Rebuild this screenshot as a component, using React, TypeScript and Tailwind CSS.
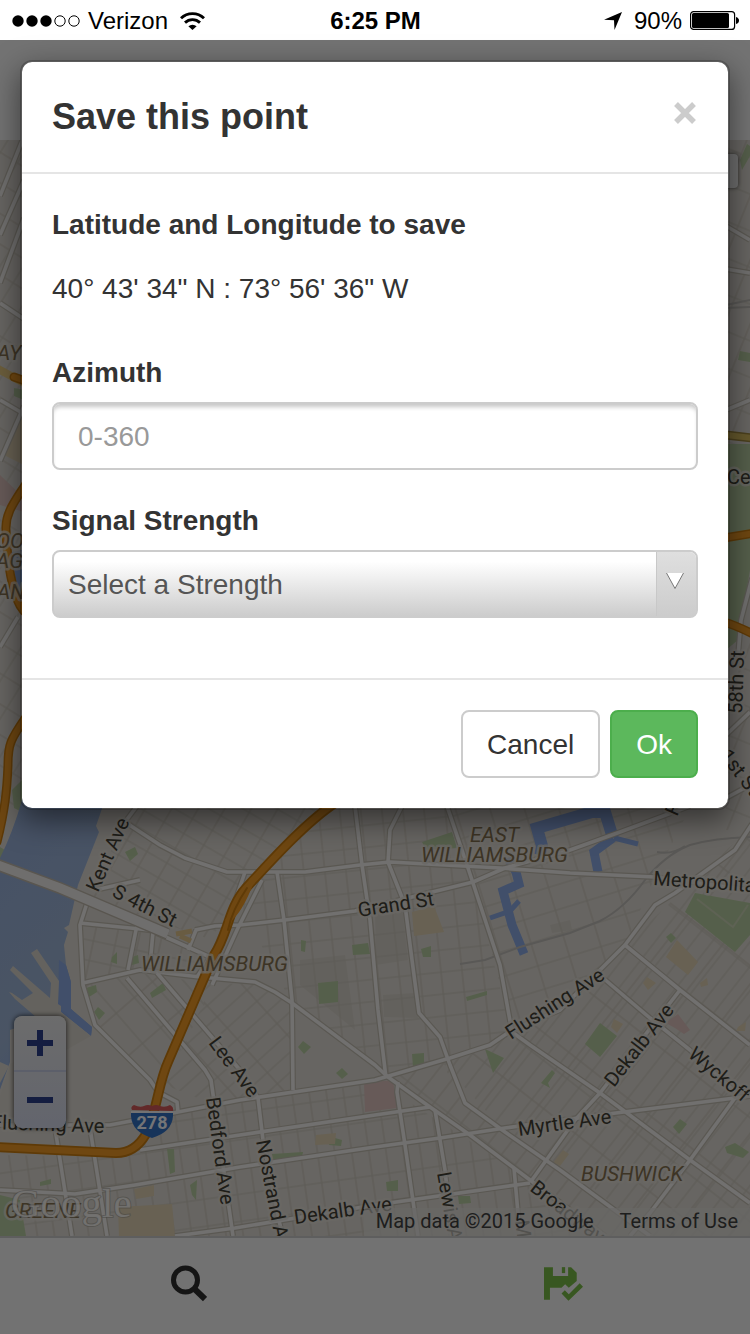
import React from "react";

type Street = { id: string; points: string; angle: number; w: number; h: number };

const BLOCKS: Street[] = [
  { id: "north", points: "130,808 330,808 240,880 212,940 90,898", angle: 30, w: 23, h: 17 },
  { id: "west", points: "83,985 140,972 215,985 165,1080 150,1078 95,1025", angle: 49, w: 40, h: 24 },
  { id: "wall", points: "84,925 150,932 212,960 205,977 140,970 84,983", angle: 12, w: 22, h: 20 },
  { id: "lee", points: "212,985 255,982 292,1003 293,1090 210,1103 165,1085", angle: -42, w: 40, h: 15 },
  { id: "center", points: "330,808 450,808 470,868 512,1035 388,1077 290,1000 240,905 250,872", angle: -6, w: 21, h: 22 },
  { id: "eastw", points: "450,808 690,808 655,877 625,945 560,1010 512,1030 475,890", angle: -17, w: 33, h: 24 },
  { id: "bushwick", points: "515,1040 625,945 750,828 750,1236 650,1236 505,1132 465,1103 440,1060", angle: 38, w: 46, h: 100 },
  { id: "bushwick2", points: "512,1036 625,945 750,828 750,1236 650,1236 590,1185 505,1132 440,1060", angle: -52, w: 60, h: 15 },
  { id: "broadway", points: "388,1077 450,1060 465,1103 650,1236 600,1236", angle: 38, w: 17, h: 60 },
  { id: "south", points: "0,1155 120,1157 160,1115 375,1080 530,1180 600,1236 0,1236", angle: -8, w: 17, h: 27 },
  { id: "farwest", points: "0,140 24,140 24,808 0,808", angle: -58, w: 26, h: 20 },
  { id: "fareast", points: "726,140 750,140 750,830 726,830", angle: 22, w: 24, h: 34 },
];

const ROADS = [
  "M137 806 L125 822 L160 845 L185 858 L227 872 L305 872 L360 865 L390 862 L500 868 L570 873 L655 877 L750 890",
  "M88 900 L80 925 L83 985 L95 1025 L150 1080 L158 1092 L177 1102 L178 1112",
  "M95 890 L140 880",
  "M80 923 L150 930 L210 957",
  "M83 983 L140 970 L200 977 L255 982 L275 992 L292 1003 L375 1065 L388 1077 L430 1107 L470 1135 L530 1180 L605 1236",
  "M277 872 L284 920 L292 1000 L293 1090",
  "M195 930 L215 926 L240 925 L285 920 L355 911 L473 882 L505 868 L570 850 L620 832 L690 806",
  "M355 806 L362 865 L370 920 L378 1010 L386 1078",
  "M402 806 L390 830 L388 862 L405 905 L412 960 L419 1013 L440 1037 L450 1065 L465 1103 L505 1132 L560 1170 L650 1236",
  "M447 806 L468 868 L500 965 L512 1032 L530 1045 L600 1093 L690 1160 L750 1203",
  "M0 1125 L110 1125 L178 1112 L240 1100 L375 1080 L450 1058 L490 1045 L512 1030 L560 1010 L600 970 L625 945 L655 905 L675 893 L700 875 L735 850 L752 824",
  "M0 1190 L75 1194 L135 1185 L240 1167 L375 1147 L440 1138 L505 1128 L600 1115 L735 1098 L750 1096",
  "M140 1150 L240 1135 L375 1115 L430 1107",
  "M175 1236 L235 1228 L375 1205 L530 1183",
  "M157 973 L240 1070 L258 1098 L263 1140 L280 1225 L283 1236",
  "M127 978 L205 1070 L211 1080 L233 1236",
  "M398 1082 L397 1092 L405 1145 L418 1236",
  "M435 1110 L445 1170 L452 1236",
  "M514 1168 L520 1236",
  "M532 1180 L575 1120 L600 1093 L680 990",
  "M625 945 L680 990 L750 1045",
  "M603 978 L650 1018 L690 1050 L735 1092",
  "M735 1098 L690 1160 L650 1213 L630 1236",
  "M55 1128 L72 1236",
  "M90 1128 L107 1236",
  "M245 872 L232 910 L215 950 L197 977",
  "M262 880 L237 930 L212 985",
  "M137 925 L128 970",
  "M153 932 L150 965",
  "M196 930 L188 950",
  "M0 196 L24 136",
  "M0 235 L24 180",
  "M0 283 L24 218",
  "M0 303 L24 319",
  "M0 400 L24 414",
  "M0 461 L24 406",
  "M0 647 L18 617",
  "M726 226 L750 240",
  "M726 269 L750 273",
  "M726 410 L750 400",
  "M738 656 L741 620 L752 578",
  "M726 735 L750 712",
  "M726 798 L750 785",
];

const PARKS = [
  "695,893 750,903 750,935 735,952 685,912",
  "422,842 452,832 457,848 426,850",
  "125,852 135,847 138,854 130,861",
  "318,983 338,981 338,1002 319,1004",
  "352,945 368,943 370,954 353,955",
  "600,1023 617,1036 600,1057 585,1044",
  "485,1049 504,1058 493,1073",
  "86,988 96,985 97,992 89,997",
  "94,1012 98,1007 105,1013 99,1020",
  "150,993 163,983 166,990 152,998",
  "272,1154 303,1152 302,1157 273,1161",
  "167,1149 174,1149 175,1172 170,1174",
  "190,1185 197,1180 196,1200 192,1195",
  "328,1136 342,1140 341,1146 329,1145",
  "298,1047 303,1041 311,1047 304,1054",
  "336,1073 342,1068 348,1074 342,1079",
  "412,1054 424,1053 424,1066 413,1067",
  "421,949 431,946 431,957 423,957",
  "386,1182 398,1180 398,1191 387,1191",
  "673,1127 680,1119 687,1124 679,1134",
  "725,1147 735,1143 749,1152 743,1158 727,1153",
  "541,1083 552,1070 555,1073 548,1083 550,1088",
  "666,937 671,933 676,938 671,943",
  "466,997 487,991 487,995 467,1001",
  "301,940 306,941 305,952 301,951",
  "0,1195 20,1200 26,1236 0,1236",
  "40,1182 51,1179 51,1184 40,1186",
  "458,1196 470,1196 471,1203 459,1204",
  "728,444 750,444 750,570 738,640 726,650",
  "740,160 747,144 750,146 750,156 742,170",
  "740,351 750,353 750,362 738,360",
  "0,847 5,850 2,862 0,862",
  "12,790 22,780 22,812 14,808",
  "14,388 24,390 24,400 14,396",
  "112,957 117,952 117,964 111,962",
  "132,957 138,955 139,963 132,965",
];

const TAN = [
  "412,912 434,906 444,932 414,936",
  "118,1207 172,1204 175,1236 119,1236",
  "134,1189 154,1185 154,1196 136,1199",
  "316,1135 336,1133 335,1144 315,1145",
  "677,940 698,962 688,975 666,957",
  "563,1150 569,1154 560,1166 553,1163",
  "614,1019 623,1024 617,1033 611,1027",
  "647,977 656,983 648,990 643,983",
  "700,983 707,978 708,985 701,987",
  "738,1027 746,1022 745,1031 736,1031",
  "8,440 24,415 24,465 4,455",
];

const ROSE = [
  "364,1083 393,1080 397,1108 365,1112",
  "666,1023 678,1014 690,1030 684,1034 675,1028",
  "0,475 24,498 24,512 0,505",
];

type Label = { t: string; x: number; y: number; r?: number; area?: boolean };

const LABELS: Label[] = [
  { t: "Kent Ave", x: 98, y: 893, r: -66 },
  { t: "S 4th St", x: 111, y: 896, r: 27 },
  { t: "Grand St", x: 359, y: 917, r: -9 },
  { t: "Metropolita", x: 653, y: 885, r: 4 },
  { t: "Flushing Ave", x: 511, y: 1040, r: -33 },
  { t: "Dekalb Ave", x: 614, y: 1088, r: -52 },
  { t: "Wyckoff", x: 687, y: 1056, r: 40 },
  { t: "Myrtle Ave", x: 519, y: 1136, r: -8 },
  { t: "Lee Ave", x: 208, y: 1043, r: 53 },
  { t: "Bedford Ave", x: 206, y: 1098, r: 82 },
  { t: "Nostrand A", x: 256, y: 1141, r: 79 },
  { t: "Dekalb Ave", x: 295, y: 1224, r: -8 },
  { t: "Flushing Ave", x: -9, y: 1129, r: 2 },
  { t: "Lewis A", x: 437, y: 1173, r: 80 },
  { t: "Broadway", x: 529, y: 1190, r: 38 },
  { t: "M", x: 515, y: 1221, r: 82 },
  { t: "58th St", x: 742, y: 714, r: -88 },
  { t: "1st St", x: 719, y: 756, r: 52 },
  { t: "Ce", x: 727, y: 484 },
  { t: "F", x: 677, y: 817, r: -66 },
  { t: "WILLIAMSBURG", x: 141, y: 971, area: true },
  { t: "EAST", x: 470, y: 842, area: true },
  { t: "WILLIAMSBURG", x: 421, y: 862, area: true },
  { t: "BUSHWICK", x: 581, y: 1181, area: true },
  { t: "GREENE", x: 5, y: 1218, area: true },
  { t: "AY P", x: -3, y: 360, area: true },
  { t: "OOP", x: -4, y: 548, area: true },
  { t: "AGE", x: -4, y: 568, area: true },
  { t: "ANE", x: -3, y: 599, area: true },
];

const HIGHWAY =
  "M335 803 C305 823 270 862 246 888 C228 908 228 935 214 955 C198 992 182 1030 168 1062 C158 1084 158 1108 146 1134 C138 1148 128 1153 116 1153 L-5 1147";
const HIGHWAYS = [
  "M28 382 L14 377",
  "M27 482 C16 500 5 512 6 530 C7 555 10 580 16 595 C18 605 22 610 28 615",
  "M26 717 C10 740 8 745 8 765 C7 790 5 810 -3 842",
  "M724 538 L755 533",
  "M724 622 C735 625 745 630 755 635",
];

function MapCanvas() {
  return (
    <svg
      className="absolute inset-0 h-full w-full"
      viewBox="0 140 750 1096"
      preserveAspectRatio="xMidYMin slice"
      role="img"
      aria-label="Map of Williamsburg and Bushwick"
    >
      <defs>
        {BLOCKS.map((b) => (
          <pattern
            key={b.id}
            id={b.id}
            width={b.w}
            height={b.h}
            patternUnits="userSpaceOnUse"
            patternTransform={`rotate(${b.angle})`}
          >
            <path d={`M0 1H${b.w}M1 0V${b.h}`} stroke="#bcb8ae" strokeWidth="1.2" fill="none" />
          </pattern>
        ))}
        <linearGradient id="river" x1="0" y1="0" x2="0.35" y2="1">
          <stop offset="0" stopColor="#8ca3cc" />
          <stop offset="0.75" stopColor="#94a9c8" />
          <stop offset="1" stopColor="#86a0d0" />
        </linearGradient>
      </defs>
      <rect y="140" width="750" height="1096" fill="#cfcbc4" />
      <path d="M375 908 L402 905 L408 960 L376 965Z M383 995 L415 993 L418 1018 L384 1017Z M300 960 L345 955 L355 1030 L300 985Z M550 925 L570 920 L572 930 L552 933Z" fill="#c7c3bb" />
      {BLOCKS.map((b) => (
        <polygon key={b.id} points={b.points} fill={`url(#${b.id})`} />
      ))}
      <g fill="#abbf96">
        {PARKS.map((p) => (
          <polygon key={p} points={p} />
        ))}
      </g>
      <g fill="#d0c2a6">
        {TAN.map((p) => (
          <polygon key={p} points={p} />
        ))}
      </g>
      <g fill="#ceb4b0">
        {ROSE.map((p) => (
          <polygon key={p} points={p} />
        ))}
      </g>
      <path d="M697 899 L733 927 L748 905" fill="none" stroke="#bcc4a8" strokeWidth="2" />

      <path
        d="M22 790 L105 800 L96 826 L99 832 L78 885 L69 925 L64 928 L68 932 L64 945 L66 965 L71 982 L71 1009 L92 1027 L91 1036 L61 1012 L40 1020 L10 1030 L10 1062 L-2 1095 L-2 862 Q12 835 22 800Z"
        fill="url(#river)"
      />
      <path d="M59 960 L66 965 L71 982 L71 1009 L92 1027 L91 1036 L61 1012 L58 1005Z" fill="#829ed4" />
      <path
        d="M31 953 L37 949 L59 981 L58 1004 L61 1006 L61 1012 L91 1036 L66 1050 L40 1040 L36 1017 L15 999 L9 992 L12 993 L22 1000 L33 993 L10 970 L13 966 L50 998 L51 983Z"
        fill="#c9c5bd"
      />
      <path d="M0 1062 L9 1066 L0 1083Z M10 1064 L14 1062 L66 1040V1122H0V1097Z" fill="#ccc8c0" />
      <path d="M12 552 L24 550 V596 L16 585Z" fill="#86a0d0" />
      <g fill="none" stroke="#829ed4" strokeWidth="9">
        <path d="M540 855 L542 846 L537 828 L592 812 L605 812 L613 838" strokeWidth="12" />
        <path d="M613 838 L594 852 L598 872 M508 858 L516 872 L519 884 L503 891 L512 925 L524 954" />
        <path d="M638 844 L614 838 M490 918 L510 911 L519 901" strokeWidth="5" />
      </g>

      <path
        d="M460 964 L485 960 L520 947 L570 933 L600 921 Q625 908 645 880 Q665 855 690 845 Q715 838 752 837 M657 852 Q672 855 685 846 M726 305 L750 300 M726 308 L750 307"
        fill="none"
        stroke="#b3b0ac"
        strokeWidth="2"
      />

      <g fill="none" strokeLinejoin="round">
        {ROADS.map((d) => (
          <path key={d} d={d} stroke="#b5b0a5" strokeWidth="6" />
        ))}
        {ROADS.map((d) => (
          <path key={d} d={d} stroke="#e2e0df" strokeWidth="3.6" />
        ))}
      </g>
      <path d="M-2 865 L60 888 L168 934" fill="none" stroke="#b3aca0" strokeWidth="12" />
      <path d="M-2 865 L60 888 L168 934" fill="none" stroke="#dfdddb" strokeWidth="9" />
      <path d="M176 934 L192 931 M180 936 L191 941" stroke="#d3b885" strokeWidth="5" />
      <path d="M-2 369 L24 383" stroke="#d8bd78" strokeWidth="8" />
      <path d="M726 435 L752 438" stroke="#96813c" strokeWidth="9" />
      <path d="M726 435 L752 438" stroke="#cbb058" strokeWidth="6" />
      <g fill="none" strokeLinejoin="round" strokeLinecap="round">
        {HIGHWAYS.map((d) => (
          <path key={d} d={d} stroke="#bd740e" strokeWidth="9" />
        ))}
        {HIGHWAYS.map((d) => (
          <path key={d} d={d} stroke="#df8f22" strokeWidth="6" />
        ))}
        <path d={HIGHWAY} stroke="#bd740e" strokeWidth="10" />
        <path d={HIGHWAY} stroke="#df8f22" strokeWidth="6.5" />
        <path d="M252 880 Q240 912 228 920" stroke="#df8f22" strokeWidth="5" />
        <path d="M247 888 Q232 910 228 930" stroke="#bd740e" strokeWidth="2" />
      </g>

      {LABELS.map((l) => (
        <text
          key={`${l.t}${l.x}`}
          transform={`translate(${l.x} ${l.y}) rotate(${l.r ?? 0})`}
          fontFamily="Roboto, sans-serif"
          fontSize={l.area ? 21 : 20}
          fontStyle={l.area ? "italic" : "normal"}
          fill={l.area ? "#7a694a" : "#3c3a30"}
          stroke="#d4d0c9"
          strokeOpacity="0.75"
          strokeWidth="5"
          strokeLinejoin="round"
          paintOrder="stroke"
        >
          {l.t}
        </text>
      ))}

      <path d="M132 1110 Q130 1107 134 1105 Q140 1108 144 1106 Q148 1104 152 1106 Q156 1104 160 1106 Q165 1108 170 1105 Q174 1107 173 1111Z" fill="#c45252" />
      <path d="M131 1111 H173 V1116 Q172 1132 152 1138 Q132 1132 131 1116Z" fill="#2f68b4" />
      <path d="M131 1112 H173" stroke="#e6e6e6" strokeWidth="2" />
      <text x="152" y="1129" textAnchor="middle" fontFamily="Roboto, sans-serif" fontWeight="700" fontSize="18" fill="#e8e8ec">
        278
      </text>
      <text
        x="11"
        y="1217"
        fontFamily="'Liberation Serif', serif"
        fontSize="41"
        fill="#edebe8"
        fillOpacity="0.85"
        stroke="#8d8982"
        strokeOpacity="0.5"
        strokeWidth="2"
        paintOrder="stroke"
      >
        Google
      </text>
    </svg>
  );
}

function StatusBar() {
  return (
    <div className="grid h-10 shrink-0 grid-cols-[1fr_auto_1fr] items-center bg-white pt-px pr-[11px] pl-3 text-2xl text-black">
      <div className="flex items-center gap-2">
        <svg width="68" height="12" viewBox="0 0 68 12" role="img" aria-label="Signal 3 of 5">
          <g fill="#000">
            <circle cx="6" cy="6" r="5.7" />
            <circle cx="20" cy="6" r="5.7" />
            <circle cx="34" cy="6" r="5.7" />
          </g>
          <g fill="none" stroke="#000">
            <circle cx="48" cy="6" r="5.2" />
            <circle cx="62" cy="6" r="5.2" />
          </g>
        </svg>
        <span>Verizon</span>
        <svg className="ml-1" width="25" height="18" viewBox="0 0 25 18" role="img" aria-label="Wi-Fi">
          <g fill="none" stroke="#000" strokeWidth="2.9">
            <path d="M1 6.3 A16.5 16.5 0 0 1 24 6.3" />
            <path d="M5 10.6 A11 11 0 0 1 20 10.6" />
          </g>
          <path d="M8.4 14.3 A6 6 0 0 1 16.6 14.3 L12.5 18Z" />
        </svg>
      </div>
      <span className="font-bold">6:25 PM</span>
      <div className="flex items-center justify-end gap-2">
        <svg className="mr-1" width="18" height="18" viewBox="0 0 18 18" role="img" aria-label="Location">
          <path d="M18 0 L10.5 18 L10 8.2 L0 7.8Z" />
        </svg>
        <span>90%</span>
        <svg width="49" height="19" viewBox="0 0 49 19" role="img" aria-label="Battery">
          <rect x="0.6" y="0.6" width="44" height="17.8" rx="3" fill="none" stroke="#000" strokeWidth="1.2" />
          <rect x="2" y="2" width="37" height="15" rx="1.5" />
          <path d="M46 6 Q49 7 49 9.5 Q49 12 46 13Z" />
        </svg>
      </div>
    </div>
  );
}

function SaveDialog() {
  return (
    <form
      role="dialog"
      aria-labelledby="dialog-title"
      className="m-5 rounded-xl border-2 border-black/20 bg-white bg-clip-padding text-[28px] leading-10 text-[#333] shadow-[0_10px_30px_rgba(0,0,0,0.5)]"
      onSubmit={(e: React.FormEvent) => e.preventDefault()}
    >
      <div className="flex items-start justify-between border-b-2 border-[#e5e5e5] p-[30px]">
        <h1 id="dialog-title" className="text-4xl leading-[50px] font-bold">
          Save this point
        </h1>
        <button type="button" aria-label="Close" className="flex h-[42px] w-[26px] items-center justify-center">
          <svg width="22" height="22" viewBox="0 0 22 22" aria-hidden="true">
            <path d="M2 2 L20 20 M20 2 L2 20" stroke="#ccc" strokeWidth="5.4" />
          </svg>
        </button>
      </div>
      <div className="flex flex-col px-[30px] pt-[31px] pb-[60px]">
        <h2 className="font-bold">Latitude and Longitude to save</h2>
        <p className="mt-6">40° 43' 34" N : 73° 56' 36" W</p>
        <label htmlFor="azimuth" className="mt-11 font-bold">
          Azimuth
        </label>
        <input
          id="azimuth"
          type="text"
          placeholder="0-360"
          className="mt-[9px] h-[68px] w-full rounded-lg border-2 border-[#ccc] bg-white px-6 pt-[2px] shadow-[inset_0_5px_4px_-2px_rgba(0,0,0,0.22)] placeholder:text-[#999]"
        />
        <label htmlFor="strength" className="mt-[31px] font-bold">
          Signal Strength
        </label>
        <div className="relative mt-[9px]">
          <select
            id="strength"
            defaultValue=""
            className="block h-[68px] w-full appearance-none rounded-lg border-2 border-[#ccc] bg-linear-to-b from-white from-15% to-[#ccc] px-[14px] pt-[2px] text-[#555]"
          >
            <option value="">Select a Strength</option>
            <option value="weak">Weak</option>
            <option value="strong">Strong</option>
          </select>
          <span className="pointer-events-none absolute inset-y-[2px] right-[2px] flex w-10 items-start justify-center rounded-r-md border-l border-[#c8c8c8] bg-linear-to-b from-[#dfdfdf] to-[#ccc] pt-5 pr-1">
            <svg width="18" height="18" viewBox="0 0 18 18" aria-hidden="true">
              <path d="M0.5 1 L9 16.5 L17.5 1" fill="#fff" stroke="#777" />
            </svg>
          </span>
        </div>
      </div>
      <div className="flex justify-end gap-[10px] border-t-2 border-[#e5e5e5] p-[30px]">
        <button type="button" className="h-[68px] rounded-lg border-2 border-[#ccc] bg-white px-6 pt-[2px]">
          Cancel
        </button>
        <button type="submit" className="h-[68px] rounded-lg border-2 border-[#4cae4c] bg-[#5cb85c] px-6 pt-[2px] text-white">
          Ok
        </button>
      </div>
    </form>
  );
}

export default function App() {
  return (
    <div className="flex min-h-screen flex-col font-['Liberation_Sans',Arial,sans-serif]">
      <StatusBar />
      <div className="relative flex grow flex-col">
        <header className="h-25 shrink-0 bg-[#e7e7e7]" />
        <main className="relative min-h-[900px] grow overflow-hidden">
          <MapCanvas />
          <div className="absolute top-[14px] right-3 h-[34px] w-24 rounded-sm bg-[#e0e0e0] shadow-[0_0_4px_rgba(0,0,0,0.6)]" />
          <div className="absolute bottom-[108px] left-[14px] flex w-[52px] flex-col overflow-hidden rounded-lg bg-linear-to-b from-[#d8d8d8] to-[#c6cada] shadow-[0_0_4px_1px_rgba(0,0,0,0.55)]">
            <button type="button" aria-label="Zoom in" className="flex h-14 items-center justify-center border-b-2 border-[#b9bfd4]">
              <svg width="26" height="26" viewBox="0 0 26 26" aria-hidden="true">
                <path d="M0 13H26M13 0V26" stroke="#283a80" strokeWidth="6" />
              </svg>
            </button>
            <button type="button" aria-label="Zoom out" className="flex h-14 items-center justify-center">
              <svg width="26" height="26" viewBox="0 0 26 26" aria-hidden="true">
                <path d="M0 13H26" stroke="#283a80" strokeWidth="6" />
              </svg>
            </button>
          </div>
          <div className="absolute right-0 bottom-0 flex h-7 items-center bg-[#d2d0cc]/70 px-3 pb-[2px] font-[Roboto,sans-serif] text-xl text-[#3c3c3c]">
            <span>Map data ©2015 Google</span>
            <a href="#terms" className="ml-[26px]">
              Terms of Use
            </a>
          </div>
        </main>
        <footer className="grid h-[98px] shrink-0 grid-cols-2 border-t-2 border-[#bdbdbd] bg-[#e5e5e5] pb-[5px] pl-[2px]">
          <button type="button" aria-label="Search" className="flex items-center justify-center">
            <svg width="36" height="37" viewBox="0 0 36 37" aria-hidden="true">
              <circle cx="14.5" cy="15" r="12" fill="none" stroke="#2b2b2b" strokeWidth="5" />
              <path d="M22.5 23 L34 34" stroke="#2b2b2b" strokeWidth="6" />
            </svg>
          </button>
          <button type="button" aria-label="Save point" className="flex items-center justify-center">
            <svg width="39" height="34" viewBox="0 0 118 102" fill="#71af42" aria-hidden="true">
              <path d="M0 0H27V27H73V0H82L99 17V42L75 62L64 52L53 62H18V99H0Z" />
              <path d="M54 0H64V18H54Z" />
              <path d="M53 80L63 70L75 82L108 49L118 59L74 102Z" />
            </svg>
          </button>
        </footer>
        <div className="absolute inset-0 bg-black/50">
          <SaveDialog />
        </div>
      </div>
    </div>
  );
}
